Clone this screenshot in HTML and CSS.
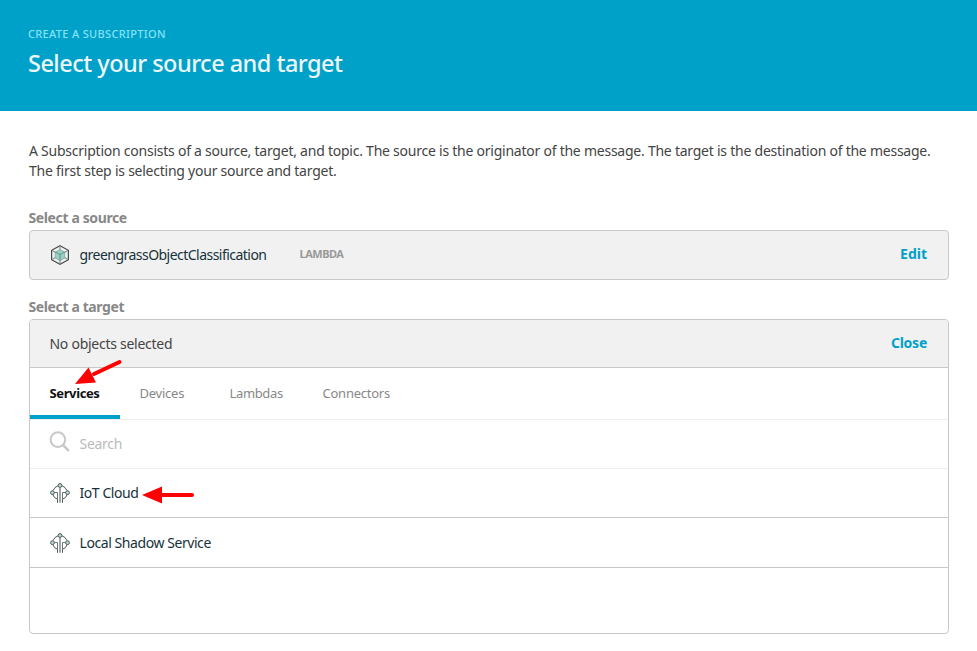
FILE: index.html
```
<!DOCTYPE html>
<html lang="en">
<head>
<meta charset="utf-8">
<title>Create a subscription</title>
<link rel="stylesheet" href="styles.css">
</head>
<body>
<svg class="defs" width="0" height="0" aria-hidden="true">
  <symbol id="service" viewBox="0 0 20 20">
    <g fill="none" stroke="#505859" stroke-width="1">
      <path d="M8 2.800Q4.500 4 3 7.500M12 2.800Q15.500 4 17 7.500M2.800 11.500Q4 15.500 7.500 16.200V19.800M17.200 11.500Q16 15.500 12.500 16.200V19.800"/>
      <path d="M4.500 9.500h3v6.500M15.500 9.500h-3v6.500" stroke="#6c7475"/>
      <path d="M10 4.500v15.300" stroke="#8a9091" stroke-width="1.600"/>
      <g fill="#b4ddd4"><circle cx="10" cy="2.500" r="1.900"/><circle cx="2.500" cy="9.700" r="1.900"/><circle cx="17.500" cy="9.700" r="1.900"/></g>
    </g>
  </symbol>
</svg>
<header class="banner">
  <div class="eyebrow">CREATE A SUBSCRIPTION</div>
  <h1>Select your source and target</h1>
</header>
<main>
  <p class="intro">A Subscription consists of a source, target, and topic. The source is the originator of the message. The target is the destination of the message.<br>The first step is selecting your source and target.</p>
  <h2 class="label">Select a source</h2>
  <section class="card source">
    <svg class="icon" viewBox="0 0 20 20">
      <path d="M10 .7 18.400 5.300v9.400L10 19.300 1.600 14.700V5.300z" fill="none" stroke="#444b4c" stroke-width="1.200"/>
      <path d="M10 1v4M2 5.500l3.500 2M18 5.500l-3.500 2M2 14.500l3.500-2M18 14.500l-3.500-2M10 15v4" stroke="#8a9091" stroke-width="1.200"/>
      <path d="M10 4.700 14.700 7v6L10 15.500 5.300 13V7z" fill="#99d0c3" stroke="#78a99e" stroke-width=".8"/>
      <path d="M5.300 7 10 9.500 14.700 7M10 9.500v6" fill="none" stroke="#5d8c83" stroke-width=".9"/>
    </svg>
    <span class="name function-name">greengrassObjectClassification</span>
    <span class="kind">LAMBDA</span>
    <a class="action">Edit</a>
  </section>
  <h2 class="label second">Select a target</h2>
  <section class="card target">
    <div class="head"><span class="empty">No objects selected</span><a class="action close">Close</a></div>
    <nav class="tabs">
      <a class="tab active">Services</a>
      <a class="tab">Devices</a>
      <a class="tab lambdas">Lambdas</a>
      <a class="tab">Connectors</a>
    </nav>
    <div class="search">
      <svg class="glass" viewBox="0 0 22 22"><circle cx="8.900" cy="8.600" r="7.300" fill="none" stroke="#c8c8c8" stroke-width="2"/><path d="M14 14l5.800 5.800" stroke="#c8c8c8" stroke-width="2.500"/></svg>
      <span>Search</span>
    </div>
    <div class="row"><svg class="icon"><use href="#service"/></svg><span class="name">IoT Cloud</span></div>
    <div class="row last"><svg class="icon"><use href="#service"/></svg><span class="name">Local Shadow Service</span></div>
  </section>
</main>
<svg class="arrow arrow-tab" viewBox="0 0 50 30"><path d="M19 17 44.500 5" stroke="red" stroke-width="4" stroke-linecap="round"/><path d="M0 27 13.500 10.500 21 25.500z" fill="red"/></svg>
<svg class="arrow arrow-row" viewBox="0 0 54 20"><path d="M18 10H50" stroke="red" stroke-width="4" stroke-linecap="round"/><path d="M0 10 20 1.500V18.500z" fill="red"/></svg>
</body>
</html>
```
FILE: styles.css
```
* { box-sizing: border-box; }
body { margin: 0; height: 651px; overflow: hidden; background: #fff; color: #444; font: 14px/20px "Noto Sans", "Open Sans", sans-serif; white-space: nowrap; }
.defs { position: absolute; }
.banner { height: 111px; padding: 24px 28px; background: #00a1c9; }
.eyebrow { height: 20px; font-size: 11px; font-weight: 500; letter-spacing: .33px; color: #84e2f7; }
h1 { margin: 3px 0 0; font-size: 23.5px; line-height: 32px; font-weight: 500; letter-spacing: -.52px; color: #edf6f8; }
main { padding: 30px 28px 0 29px; }
.intro { margin: 0; height: 67px; letter-spacing: -.24px; }
.label { margin: 0 0 0 -.5px; height: 22px; font-size: 14px; font-weight: 700; letter-spacing: -.38px; color: #888; }
.second { margin-top: 17px; }
.card { border: 1px solid #c8c8c8; border-radius: 4px; overflow: hidden; }
.source { height: 50px; display: flex; align-items: center; background: #f1f1f1; padding: 0 21px 0 20px; }
.icon { width: 20px; height: 20px; margin-right: 9.5px; flex: none; }
.name { letter-spacing: -.43px; color: #16323a; }
.function-name { width: 187px; letter-spacing: -.53px; }
.kind { margin: -2px 0 0 33px; font-size: 11px; font-weight: 700; letter-spacing: -.5px; color: #999; }
.action { margin: -2px 0 0 auto; font-weight: 700; color: #00a1c9; }
.close { letter-spacing: -.25px; }
.target { height: 315px; }
.head { height: 48px; display: flex; align-items: center; padding: 0 21px 0 19.5px; background: #f1f1f1; border-bottom: 1px solid #c8c8c8; }
.empty { letter-spacing: -.27px; }
.tabs { height: 52px; display: flex; border-bottom: 1px solid #eee; }
.tab { width: 90px; height: 51px; padding: 15px 0 0 19.5px; font-size: 13px; letter-spacing: -.24px; color: #888; }
.lambdas { width: 93px; letter-spacing: -.36px; }
.active { color: #111; font-weight: 700; letter-spacing: -.38px; border-bottom: 4px solid #00a1c9; }
.search { height: 49px; display: flex; align-items: center; padding: 0 20px; letter-spacing: -.28px; color: #bbb; border-bottom: 1px solid #eee; }
.glass { width: 22px; height: 22px; margin: -4px 8.5px 0 -1px; }
.row { height: 49px; display: flex; align-items: center; padding: 0 20px; border-bottom: 1px solid #c8c8c8; }
.last { height: 50px; }
.arrow { position: absolute; }
.arrow-tab { left: 75px; top: 357px; width: 50px; height: 30px; }
.arrow-row { left: 142px; top: 485px; width: 54px; height: 20px; }
```
